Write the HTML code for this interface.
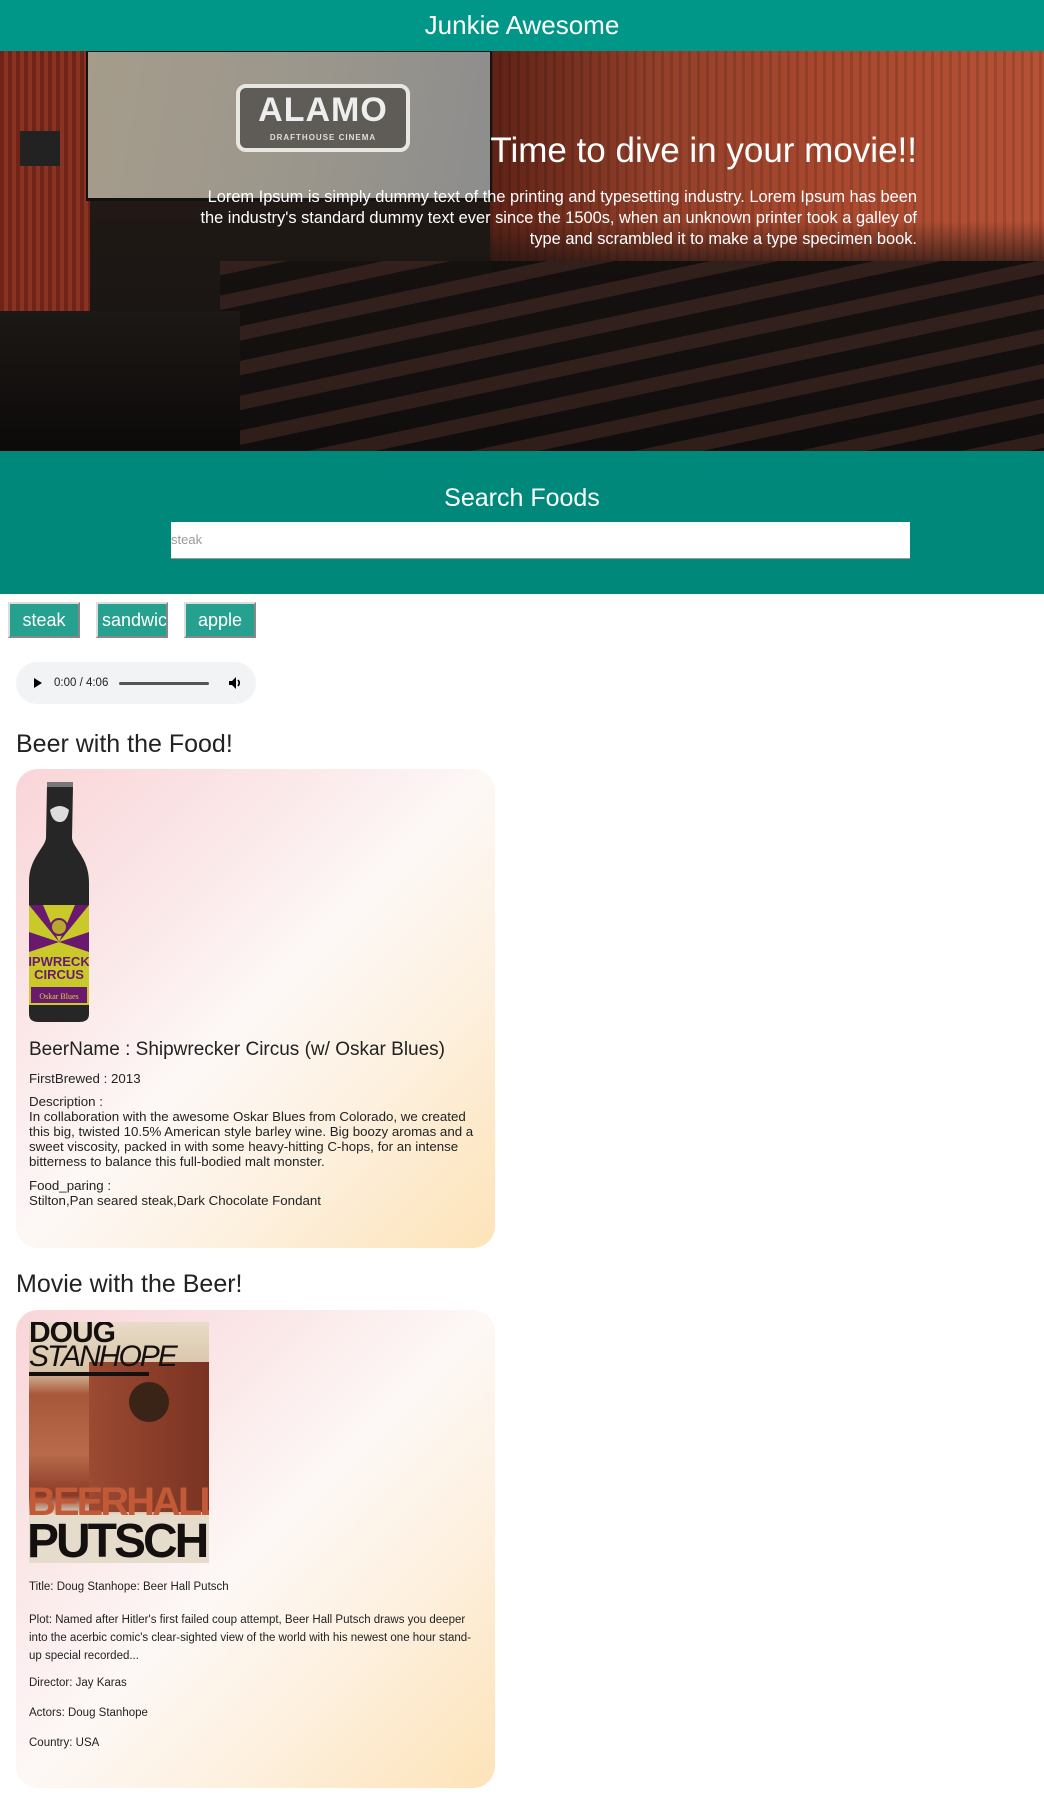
<!DOCTYPE html>
<html><head><meta charset="utf-8">
<style>
*{box-sizing:border-box;margin:0;padding:0}
body{width:1044px;height:1794px;background:#fff;font-family:"Liberation Sans",Arial,sans-serif;color:#222;position:relative;overflow:hidden}
.abs{position:absolute}
.hdr{left:0;top:0;width:1044px;height:51px;background:#009688;color:#fff;font-size:26px;text-align:center;line-height:50px}
.hero{left:0;top:51px;width:1044px;height:400px;overflow:hidden;background:linear-gradient(180deg,#2a1e1a 0%,#1e1815 45%,#141210 100%)}
.srch{left:0;top:451px;width:1044px;height:143px;background:#00897b}
.btn{top:602px;height:36px;width:72px;background:#26a08f;color:#fff;font-size:18px;line-height:32px;border:2px solid;border-color:#ddd #888 #888 #ddd;overflow:hidden;white-space:nowrap;text-align:center}
.card{left:16px;width:479px;border-radius:22px;background:linear-gradient(135deg,#f9d5d8 0%,#fbe7e8 28%,#fdf8f6 50%,#fdf0de 72%,#fde3b8 100%)}
.h2{left:16px;font-size:25px;color:#222}
</style></head><body>
<div class="abs hdr">Junkie Awesome</div>
<div class="abs hero">
  <!-- right wall -->
  <div class="abs" style="left:490px;top:0;width:554px;height:210px;background:linear-gradient(90deg,#5e2216 0%,#93402a 30%,#a8482e 60%,#b65236 100%)"></div>
  <div class="abs" style="left:490px;top:0;width:554px;height:210px;background:repeating-linear-gradient(90deg,rgba(0,0,0,.12) 0 3px,rgba(0,0,0,0) 3px 9px)"></div>
  <div class="abs" style="left:490px;top:170px;width:554px;height:60px;background:linear-gradient(180deg,rgba(20,16,14,0),#1a1412)"></div>
  <!-- left curtain -->
  <div class="abs" style="left:0;top:0;width:90px;height:260px;background:repeating-linear-gradient(90deg,#6e2418 0 4px,#8a3322 4px 8px)"></div>
  <div class="abs" style="left:20px;top:80px;width:40px;height:35px;background:#222"></div>
  <!-- screen -->
  <div class="abs" style="left:86px;top:0;width:406px;height:150px;background:#141210"></div>
  <div class="abs" style="left:88px;top:1px;width:402px;height:146px;background:linear-gradient(100deg,#a59c8b 0%,#9c978c 50%,#8d8d8d 100%)"></div>
  <div class="abs" style="left:236px;top:33px;width:174px;height:68px;border:4px solid #e8e6e0;border-radius:10px;background:#5f5c57"></div>
  <div class="abs" style="left:236px;top:40px;width:174px;text-align:center;color:#eee;font-weight:bold;font-size:34px;letter-spacing:1px">ALAMO</div>
  <div class="abs" style="left:236px;top:82px;width:174px;text-align:center;color:#ddd;font-weight:bold;font-size:8px;letter-spacing:1px">DRAFTHOUSE CINEMA</div>
  <!-- seats -->
  <div class="abs" style="left:220px;top:210px;width:830px;height:190px;background:repeating-linear-gradient(168deg,rgba(70,40,35,.55) 0 14px,rgba(10,8,8,.4) 14px 34px)"></div>
  <div class="abs" style="left:0;top:260px;width:240px;height:140px;background:linear-gradient(180deg,#1c1816,#0c0a09)"></div>
  <div class="abs" style="right:127px;top:80px;color:#fff;font-size:35px;white-space:nowrap">Time to dive in your movie!!</div>
  <div class="abs" style="left:186px;width:731px;top:136px;color:#fff;font-size:16.4px;line-height:21px;text-align:right">Lorem Ipsum is simply dummy text of the printing and typesetting industry. Lorem Ipsum has been the industry's standard dummy text ever since the 1500s, when an unknown printer took a galley of type and scrambled it to make a type specimen book.</div>
</div>
<div class="abs srch">
  <div class="abs" style="left:0;top:33px;width:1044px;text-align:center;color:#fff;font-size:25px">Search Foods</div>
  <div class="abs" style="left:171px;top:71px;width:739px;height:37px;background:#fff;border-bottom:1px solid #999;color:#999;font-size:13px;line-height:36px">steak</div>
</div>
<div class="abs btn" style="left:8px">steak</div>
<div class="abs btn" style="left:96px;text-align:left;padding-left:4px">sandwich</div>
<div class="abs btn" style="left:184px">apple</div>
<div class="abs" style="left:16px;top:662px;width:240px;height:42px;border-radius:21px;background:#f1f3f4"></div>
<svg class="abs" style="left:30px;top:675px" width="16" height="16"><path d="M4 3 L12 8 L4 13Z" fill="#000"/></svg>
<div class="abs" style="left:54px;top:677px;font-size:11.5px;color:#222">0:00 / 4:06</div>
<div class="abs" style="left:119px;top:682px;width:90px;height:3px;background:#555;border-radius:2px"></div>
<svg class="abs" style="left:227px;top:675px" width="16" height="16"><path d="M2 6 H5 L9 2 V14 L5 10 H2Z" fill="#000"/><path d="M11 5 Q13.5 8 11 11" stroke="#000" stroke-width="1.6" fill="none"/></svg>
<div class="abs h2" style="top:730px">Beer with the Food!</div>
<div class="abs card" style="top:769px;height:479px"></div>
<svg class="abs" style="left:29px;top:782px" width="60" height="241">
  <path d="M18 0 H44 V4 L43 56 C44 66 60 76 60 100 V232 C60 238 56 240 50 240 H10 C4 240 0 238 0 232 V100 C0 76 16 66 17 56 L18 4Z" fill="#262626"/>
  <rect x="18" y="0" width="26" height="5" fill="#777"/>
  <path d="M21 28 Q31 20 40 28 Q38 40 31 40 Q23 40 21 28Z" fill="#ddd"/>
  <rect x="0" y="123" width="60" height="100" fill="#c9c92a"/>
  <path d="M0 123 L30 160 L14 123Z M60 123 L30 160 L46 123Z M0 150 L30 160 L0 170Z M60 150 L30 160 L60 170Z" fill="#6a1a6e"/>
  <circle cx="30" cy="145" r="8" fill="#b8a830" stroke="#6a1a6e" stroke-width="2"/>
  <text x="30" y="184" font-size="13" font-weight="bold" fill="#6a1a6e" text-anchor="middle" font-family="Liberation Sans">IPWRECK</text>
  <text x="30" y="197" font-size="13" font-weight="bold" fill="#6a1a6e" text-anchor="middle" font-family="Liberation Sans">CIRCUS</text>
  <rect x="2" y="205" width="56" height="16" fill="#6a1a6e"/>
  <text x="30" y="217" font-size="8" fill="#d8d040" text-anchor="middle" font-family="Liberation Serif">Oskar Blues</text>
</svg>
<div class="abs" style="left:29px;top:1039px;font-size:19px;color:#222">BeerName : Shipwrecker Circus (w/ Oskar Blues)</div>
<div class="abs" style="left:29px;top:1071px;font-size:13.3px;color:#222">FirstBrewed : 2013</div>
<div class="abs" style="left:29px;top:1094px;width:460px;font-size:13.3px;line-height:15px;color:#222">Description :<br>In collaboration with the awesome Oskar Blues from Colorado, we created this big, twisted 10.5% American style barley wine. Big boozy aromas and a sweet viscosity, packed in with some heavy-hitting C-hops, for an intense bitterness to balance this full-bodied malt monster.</div>
<div class="abs" style="left:29px;top:1178px;font-size:13.3px;line-height:15px;color:#222">Food_paring :<br>Stilton,Pan seared steak,Dark Chocolate Fondant</div>
<div class="abs h2" style="top:1270px">Movie with the Beer!</div>
<div class="abs card" style="top:1310px;height:478px"></div>
<div class="abs" style="left:29px;top:1322px;width:180px;height:241px;overflow:hidden;background:linear-gradient(180deg,#e8dcc8 0%,#d8c4a8 20%,#a8583a 30%,#b86a4a 55%,#8a3a28 72%,#e6dccc 80%,#e6dccc 100%)">
  <div class="abs" style="left:60px;top:40px;width:120px;height:150px;background:linear-gradient(90deg,#9c4a32,#7a3322)"></div>
  <div class="abs" style="left:100px;top:60px;width:40px;height:40px;border-radius:50%;background:#3a2418"></div>
  <div class="abs" style="left:0;top:-6px;font-weight:bold;font-size:30px;color:#151010;letter-spacing:-1px">DOUG</div>
  <div class="abs" style="left:0;top:18px;font-size:30px;font-style:italic;color:#151010;letter-spacing:-2px">STANHOPE</div>
  <div class="abs" style="left:0;top:50px;width:120px;height:4px;background:#151010"></div>
  <div class="abs" style="left:-2px;top:160px;font-weight:bold;font-size:40px;color:#c25a38;letter-spacing:-3px;line-height:40px">BEERHALL</div>
  <div class="abs" style="left:-2px;top:196px;font-weight:bold;font-size:48px;color:#151010;letter-spacing:-3px;line-height:48px">PUTSCH</div>
</div>
<div class="abs" style="left:29px;top:1581px;font-size:11.5px;color:#222">Title: Doug Stanhope: Beer Hall Putsch</div>
<div class="abs" style="left:29px;top:1611px;width:445px;font-size:11.5px;line-height:18px;color:#222">Plot: Named after Hitler's first failed coup attempt, Beer Hall Putsch draws you deeper into the acerbic comic's clear-sighted view of the world with his newest one hour stand-up special recorded...</div>
<div class="abs" style="left:29px;top:1677px;font-size:11.5px;color:#222">Director: Jay Karas</div>
<div class="abs" style="left:29px;top:1707px;font-size:11.5px;color:#222">Actors: Doug Stanhope</div>
<div class="abs" style="left:29px;top:1737px;font-size:11.5px;color:#222">Country: USA</div>
</body></html>
